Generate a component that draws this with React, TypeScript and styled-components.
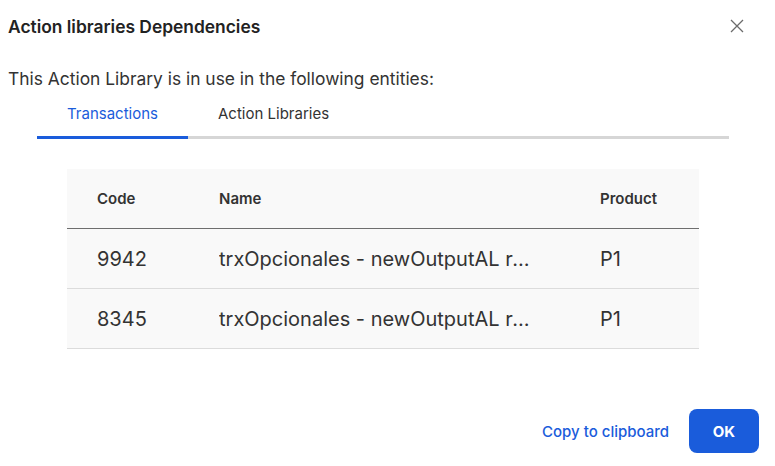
import React, { useState } from 'react';
import styled, { createGlobalStyle } from 'styled-components';

const GlobalStyle = createGlobalStyle`
	html, body {
		margin: 0;
		padding: 0;
		background: #fff;
		font-family: Inter, 'Noto Sans', sans-serif;
	}
`;

const rows = [
	{ code: '9942', name: 'trxOpcionales - newOutputAL reference', product: 'P1' },
	{ code: '8345', name: 'trxOpcionales - newOutputAL reference', product: 'P1' }
];

const App = () => {
	const [tab, setTab] = useState<'trx' | 'al'>('trx');

	return (
		<>
			<GlobalStyle />
			<Dialog>
				<Header>
					<Title>Action libraries Dependencies</Title>
					<CloseButton aria-label="Close">
						<svg width="14" height="14" viewBox="0 0 14 14">
							<path d="M1 1L13 13M13 1L1 13" stroke="#6b6b6b" strokeWidth="1.3" fill="none" />
						</svg>
					</CloseButton>
				</Header>

				<Intro>This Action Library is in use in the following entities:</Intro>

				<TabList>
					<Tab active={tab === 'trx'} onClick={() => setTab('trx')}>Transactions</Tab>
					<Tab active={tab === 'al'} onClick={() => setTab('al')}>Action Libraries</Tab>
				</TabList>

				<Table>
					<HeadRow>
						<HeadCell>Code</HeadCell>
						<HeadCell>Name</HeadCell>
						<HeadCell>Product</HeadCell>
					</HeadRow>
					{rows.map((row) => (
						<Row key={row.code}>
							<Cell>{row.code}</Cell>
							<Cell><Truncate>{row.name}</Truncate></Cell>
							<Cell>{row.product}</Cell>
						</Row>
					))}
				</Table>

				<Footer>
					<LinkButton>Copy to clipboard</LinkButton>
					<PrimaryButton>OK</PrimaryButton>
				</Footer>
			</Dialog>
		</>
	);
};

export default App;

const Dialog = styled.div`
	width: 775px;
	height: 466px;
	box-sizing: border-box;
	display: flex;
	flex-direction: column;
`;

const Header = styled.div`
	height: 52px;
	display: flex;
	align-items: center;
	justify-content: space-between;
	padding: 0 31px 0 8px;
`;

const Title = styled.h2`
	margin: 0;
	font-size: 17.4px;
	font-weight: 600;
	color: #222;
`;

const CloseButton = styled.button`
	border: none;
	background: none;
	padding: 0;
	width: 14px;
	height: 14px;
	display: flex;
	cursor: pointer;
`;

const Intro = styled.p`
	margin: 15px 0 0 8px;
	font-size: 17.4px;
	line-height: 24px;
	color: #333;
`;

const TabList = styled.div`
	display: flex;
	margin-left: 37px;
	width: 692px;
	border-bottom: 3px solid #d6d6d6;
`;

const Tab = styled.button<{ active: boolean }>`
	border: none;
	background: none;
	font-family: Inter, 'Noto Sans', sans-serif;
	font-size: 15px;
	line-height: 20px;
	padding: 13px 30px 12px;
	margin-bottom: -3px;
	border-bottom: 3px solid ${props => props.active ? '#1a5cdb' : 'transparent'};
	color: ${props => props.active ? '#1a5cdb' : '#333'};
	cursor: pointer;
`;

const Table = styled.div`
	margin: 30px 0 0 67px;
	width: 632px;
	background: #f9f9f9;
	font-family: Inter, 'Noto Sans', sans-serif;
`;

const HeadRow = styled.div`
	display: grid;
	grid-template-columns: 122px 381px 1fr;
	height: 59px;
	align-items: center;
	border-bottom: 1px solid #6e6e6e;
`;

const HeadCell = styled.div`
	padding-left: 30px;
	font-size: 15px;
	font-weight: 600;
	color: #333;
`;

const Row = styled.div`
	display: grid;
	grid-template-columns: 122px 381px 1fr;
	height: 59px;
	align-items: center;
	border-bottom: 1px solid #dcdcdc;
`;

const Cell = styled.div`
	padding-left: 30px;
	font-size: 20px;
	color: #333;
	min-width: 0;
`;

const Truncate = styled.div`
	max-width: 312px;
	white-space: nowrap;
	overflow: hidden;
	text-overflow: ellipsis;
`;

const Footer = styled.div`
	margin-top: 60px;
	display: flex;
	justify-content: flex-end;
	align-items: center;
	gap: 20px;
	padding-right: 16px;
`;

const LinkButton = styled.button`
	border: none;
	background: none;
	padding: 0;
	font-family: Inter, 'Noto Sans', sans-serif;
	font-size: 15px;
	font-weight: 500;
	color: #1a5cdb;
	cursor: pointer;
`;

const PrimaryButton = styled.button`
	width: 70px;
	height: 44px;
	border: none;
	border-radius: 8px;
	background: #1a5cdb;
	color: #fff;
	font-family: Inter, 'Noto Sans', sans-serif;
	font-size: 15px;
	font-weight: 700;
	cursor: pointer;
`;
